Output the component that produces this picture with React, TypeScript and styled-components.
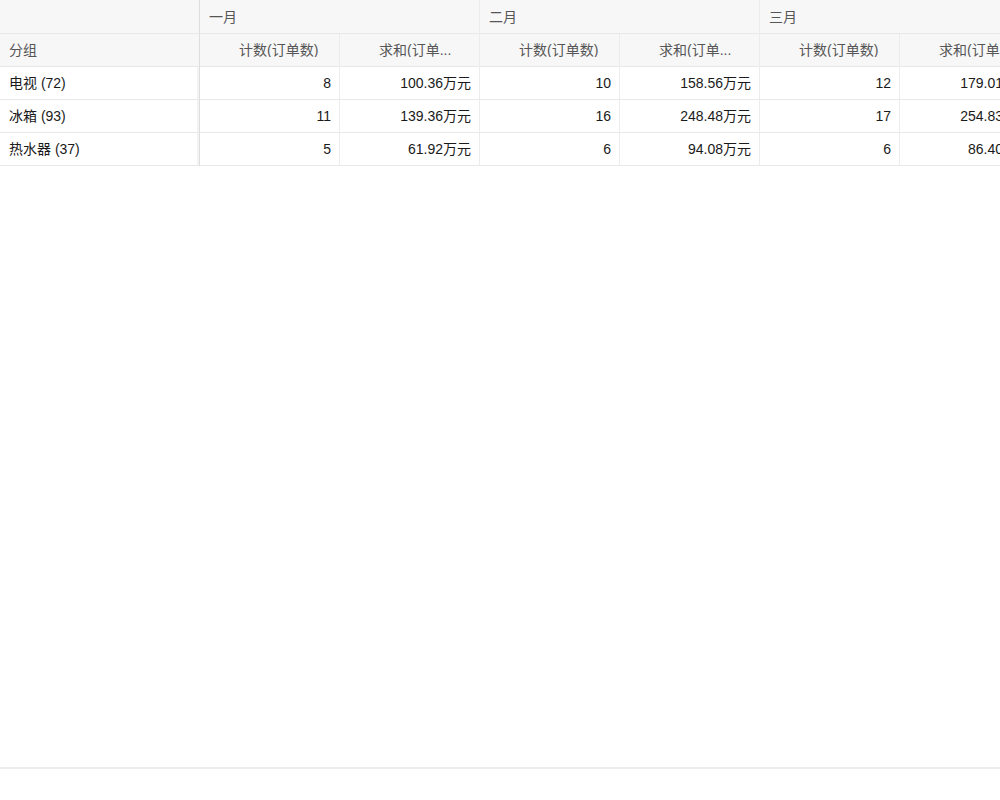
import React from "react";
import styled, { createGlobalStyle } from "styled-components";

const Global = createGlobalStyle`
  html, body { margin: 0; padding: 0; background: #fff; }
  body { font-family: "Liberation Sans", "Noto Sans CJK SC", sans-serif; font-size: 14px; color: #1f1f1f; }
`;

const Page = styled.div`
  height: 100vh;
  display: flex;
  flex-direction: column;
  overflow: hidden;
`;

const TableArea = styled.div`
  flex: 1;
  overflow: hidden;
`;

const Grid = styled.div`
  display: grid;
  grid-template-columns: 200px repeat(6, 140px);
  grid-template-rows: 34px;
  grid-auto-rows: 33px;
  width: max-content;
`;

const Cell = styled.div<{
  $head?: boolean;
  $align?: "left" | "right";
  $span?: number;
  $frozen?: boolean;
  $padRight?: number;
}>`
  box-sizing: border-box;
  grid-column: span ${(p) => p.$span ?? 1};
  display: flex;
  align-items: center;
  justify-content: ${(p) => (p.$align === "right" ? "flex-end" : "flex-start")};
  padding: 0 ${(p) => p.$padRight ?? 8}px 0 9px;
  background: ${(p) => (p.$head ? "#f7f7f7" : "#fff")};
  color: ${(p) => (p.$head ? "#555" : "#1a1a1a")};
  border-bottom: 1px solid #e8e8e8;
  border-right: 1px solid ${(p) => (p.$frozen ? "#dedede" : "#ececec")};
  box-shadow: ${(p) => (p.$frozen && !p.$head ? "inset -2px 0 0 #f3f3f3" : "none")};
  white-space: nowrap;
  overflow: hidden;
  line-height: 1;
`;

const HeadLabel = styled.span`
  display: block;
  width: 80px;
  text-align: left;
  overflow: hidden;
  white-space: nowrap;
`;

const Footer = styled.div`
  height: 31px;
  border-top: 2px solid #ececec;
  background: #fff;
`;

const months = ["一月", "二月", "三月"];
const rows = [
  { name: "电视 (72)", vals: ["8", "100.36万元", "10", "158.56万元", "12", "179.01万元"] },
  { name: "冰箱 (93)", vals: ["11", "139.36万元", "16", "248.48万元", "17", "254.83万元"] },
  { name: "热水器 (37)", vals: ["5", "61.92万元", "6", "94.08万元", "6", "86.40万元"] },
];

export default function App() {
  return (
    <Page>
      <Global />
      <TableArea>
        <Grid>
          <Cell $head $frozen />
          {months.map((m) => (
            <Cell key={m} $head $span={2}>
              {m}
            </Cell>
          ))}
          <Cell $head $frozen>分组</Cell>
          {months.map((m) => (
            <React.Fragment key={m}>
              <Cell $head $align="right" $padRight={20}>
                <HeadLabel>计数(订单数)</HeadLabel>
              </Cell>
              <Cell $head $align="right" $padRight={20}>
                <HeadLabel>求和(订单...</HeadLabel>
              </Cell>
            </React.Fragment>
          ))}
          {rows.map((r) => (
            <React.Fragment key={r.name}>
              <Cell $frozen>{r.name}</Cell>
              {r.vals.map((v, i) => (
                <Cell key={i} $align="right">
                  {v}
                </Cell>
              ))}
            </React.Fragment>
          ))}
        </Grid>
      </TableArea>
      <Footer />
    </Page>
  );
}
